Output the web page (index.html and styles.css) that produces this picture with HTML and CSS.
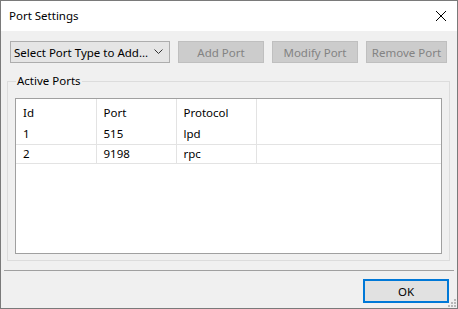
FILE: index.html
```html
<!DOCTYPE html>
<html lang="en">
<head>
    <meta charset="UTF-8">
    <title>Port Settings</title>
    <link rel="stylesheet" href="styles.css">
</head>
<body>
    <div class="window">
        <div class="titlebar">
            <span class="title">Port Settings</span>
            <svg class="close" width="12" height="12" viewBox="0 0 12 12">
                <path d="M1 1 L11 11 M11 1 L1 11" stroke="#000" stroke-width="1" fill="none"/>
            </svg>
        </div>

        <div class="content">
            <div class="toolbar">
                <div class="combo">
                    <span>Select Port Type to Add...</span>
                    <svg width="9" height="6" viewBox="0 0 9 6">
                        <path d="M0.5 0.5 L4.5 4.5 L8.5 0.5" stroke="#333" stroke-width="1" fill="none"/>
                    </svg>
                </div>
                <button class="btn add" disabled>Add Port</button>
                <button class="btn modify" disabled>Modify Port</button>
                <button class="btn remove" disabled>Remove Port</button>
            </div>

            <fieldset class="group">
                <legend>Active Ports</legend>
                <div class="listview">
                    <table>
                        <tr class="head">
                            <td>Id</td><td>Port</td><td>Protocol</td><td class="fill"></td>
                        </tr>
                        <tr>
                            <td>1</td><td>515</td><td>lpd</td><td class="fill"></td>
                        </tr>
                        <tr>
                            <td>2</td><td>9198</td><td>rpc</td><td class="fill"></td>
                        </tr>
                    </table>
                </div>
            </fieldset>

            <div class="separator"></div>

            <div class="footer">
                <button class="btn ok">OK</button>
                <svg class="grip" width="8" height="8" viewBox="0 0 8 8">
                    <rect x="6" y="0" width="2" height="2" fill="#b8b8b8"/>
                    <rect x="3" y="3" width="2" height="2" fill="#b8b8b8"/>
                    <rect x="6" y="3" width="2" height="2" fill="#b8b8b8"/>
                    <rect x="0" y="6" width="2" height="2" fill="#b8b8b8"/>
                    <rect x="3" y="6" width="2" height="2" fill="#b8b8b8"/>
                    <rect x="6" y="6" width="2" height="2" fill="#b8b8b8"/>
                </svg>
            </div>
        </div>
    </div>
</body>
</html>
```

FILE: styles.css
```css
body {
    margin: 0;
    padding: 0;
    font-family: "Segoe UI", "Noto Sans", "Liberation Sans", sans-serif;
    font-size: 11.5px;
    color: #000;
}
.window {
    width: 458px;
    height: 309px;
    box-sizing: border-box;
    border: 1px solid #7a7a7a;
    display: flex;
    flex-direction: column;
}
.titlebar {
    height: 30px;
    background-color: #fff;
    display: flex;
    align-items: center;
    justify-content: space-between;
    padding: 0 10px 0 8px;
    flex-shrink: 0;
}
.title {
    font-size: 11.5px;
    margin-top: -1px;
}
.content {
    flex: 1;
    background-color: #f0f0f0;
    display: flex;
    flex-direction: column;
    position: relative;
}
.toolbar {
    display: flex;
    gap: 8px;
    padding: 10px 0 0 9px;
}
.combo {
    width: 160px;
    height: 22px;
    box-sizing: border-box;
    border: 1px solid #adadad;
    background-color: #e5e5e5;
    display: flex;
    align-items: center;
    justify-content: space-between;
    padding: 0 6px 0 3px;
}
.btn {
    height: 22px;
    box-sizing: border-box;
    font-family: inherit;
    font-size: 11.5px;
    padding: 0;
    margin: 0;
}
.btn[disabled] {
    background-color: #cccccc;
    border: 1px solid #bfbfbf;
    color: #838383;
}
.add, .modify {
    width: 86px;
}
.remove {
    width: 81px;
}
.group {
    margin: 10px 7px 0 6px;
    padding: 10px 7px 7px 7px;
    border: 1px solid #dcdcdc;
    height: 188px;
    box-sizing: border-box;
}
.group legend {
    padding: 0 1px;
    margin-left: 1px;
    line-height: 16px;
}
.listview {
    height: 156px;
    box-sizing: border-box;
    border: 1px solid #a0a0a0;
    background-color: #fff;
    margin-top: -1px;
}
table {
    border-collapse: collapse;
    width: 100%;
}
td {
    width: 80px;
    padding: 0 0 0 7px;
    box-sizing: border-box;
    border-right: 1px solid #e3e3e3;
    border-bottom: 1px solid #e3e3e3;
    height: 19px;
    line-height: 18px;
}
td.fill {
    width: auto;
    border-right: none;
}
tr.head td {
    height: 26px;
    border-bottom: none;
    padding-top: 1px;
}
.separator {
    height: 1px;
    background-color: #a0a0a0;
    margin: 9px 3px 0 3px;
}
.footer {
    display: flex;
    justify-content: flex-end;
    padding: 8px 8px 0 0;
}
.ok {
    width: 86px;
    height: 24px;
    background-color: #e1e1e1;
    border: 2px solid #0078d7;
    color: #000;
}
.grip {
    position: absolute;
    right: 1px;
    bottom: 1px;
}
```
